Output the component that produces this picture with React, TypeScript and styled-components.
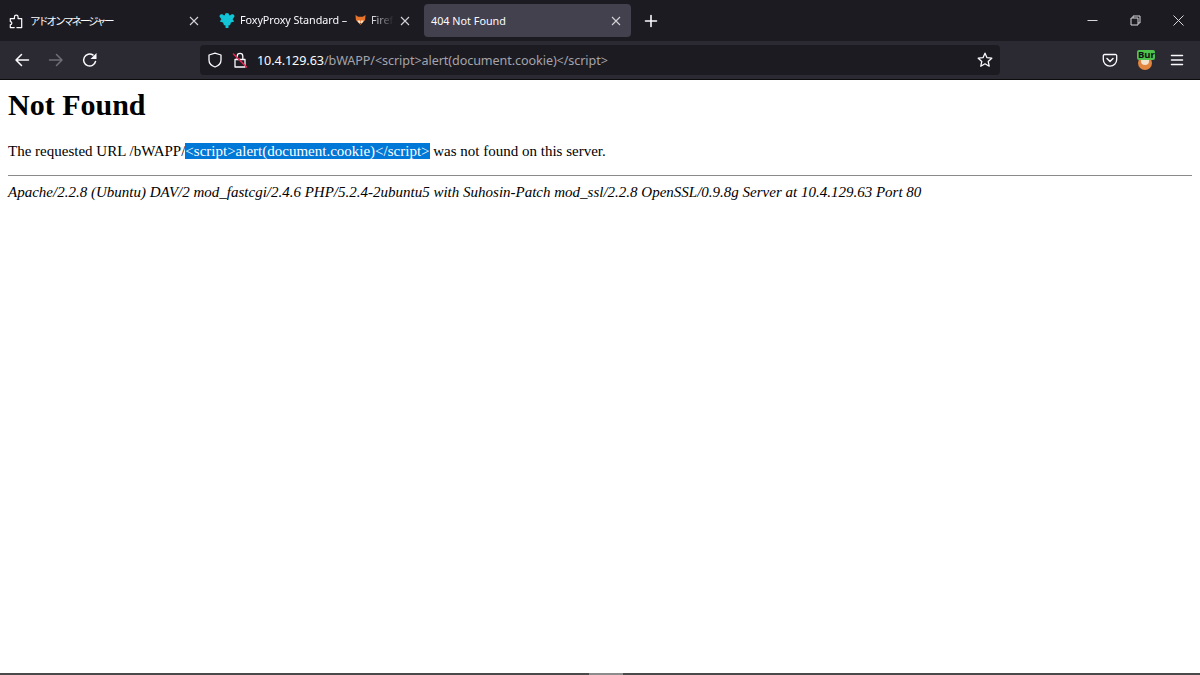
import React from 'react'
import styled, { createGlobalStyle } from 'styled-components'

const GlobalStyle = createGlobalStyle`
  html, body { margin: 0; padding: 0; background: #fff; overflow: hidden; }
`

const UI_FONT = `"Noto Sans", "Noto Sans CJK JP", "Open Sans", sans-serif`
const DOC_FONT = `"Liberation Serif", "Times New Roman", serif`

const Window = styled.div`
  width: 1200px;
  height: 675px;
  display: flex;
  flex-direction: column;
  overflow: hidden;
`

const TabBar = styled.div`
  height: 41px;
  background: #1c1b22;
  display: flex;
  align-items: flex-start;
  flex: none;
`

const Tab = styled.div<{ $active?: boolean; $width: number; $padRight: number }>`
  width: ${p => p.$width}px;
  height: 33px;
  margin-top: 4px;
  flex: none;
  display: flex;
  align-items: center;
  gap: 5px;
  padding: 0 ${p => p.$padRight}px 0 7px;
  box-sizing: border-box;
  border-radius: 4px;
  background: ${p => (p.$active ? '#42414d' : 'transparent')};
  font: 10.8px ${UI_FONT};
  color: #fbfbfe;
  white-space: nowrap;
`

const TabTitle = styled.span`
  flex: 1;
  min-width: 0;
  overflow: hidden;
`

const FadedTitle = styled(TabTitle)`
  letter-spacing: -0.08px;
  -webkit-mask-image: linear-gradient(to right, #000 84%, transparent 100%);
  mask-image: linear-gradient(to right, #000 84%, transparent 100%);
`

const JapaneseTitle = styled(TabTitle)`
  font-size: 10.5px;
  letter-spacing: -2.2px;
`

const FoxMark = styled.span`
  display: inline-block;
  vertical-align: -2px;
  margin: 0 5px 0 8px;
`

const TabSpacer = styled.div<{ $width: number }>`
  width: ${p => p.$width}px;
  flex: none;
`

const IconBox = styled.span<{ $size?: number; $color?: string }>`
  width: ${p => p.$size ?? 16}px;
  height: ${p => p.$size ?? 16}px;
  flex: none;
  display: inline-flex;
  align-items: center;
  justify-content: center;
  color: ${p => p.$color ?? '#fbfbfe'};
  & > svg { display: block; }
`

const NewTab = styled.div`
  width: 40px;
  height: 33px;
  margin-top: 4px;
  display: flex;
  align-items: center;
  justify-content: center;
  color: #fbfbfe;
`

const WindowControls = styled.div`
  margin-left: auto;
  display: flex;
  height: 41px;
  align-items: center;
`

const WindowButton = styled.div`
  width: 43px;
  display: flex;
  justify-content: center;
  color: #d8d8da;
`

const Toolbar = styled.div`
  height: 39px;
  background: #2b2a33;
  display: flex;
  align-items: center;
  flex: none;
  padding-left: 14px;
  box-sizing: border-box;
  border-bottom: 1px solid #0c0c0d;
`

const NavGroup = styled.div`
  width: 186px;
  flex: none;
  display: flex;
  gap: 18px;
`

const UrlBar = styled.div`
  width: 800px;
  height: 30px;
  flex: none;
  background: #1c1b22;
  border-radius: 4px;
  display: flex;
  align-items: center;
  padding: 0 7px;
  box-sizing: border-box;
  gap: 8px;
`

const UrlText = styled.div`
  flex: 1;
  font: 12.6px ${UI_FONT};
  color: #a4a4aa;
  white-space: nowrap;
  letter-spacing: -0.08px;
`

const UrlHost = styled.span`
  color: #fbfbfe;
`

const RightTools = styled.div`
  flex: 1;
  display: flex;
  align-items: center;
  padding-left: 102px;
`

const BurpSlot = styled.div`
  margin: 0 15px 0 18px;
`

const BurpWrap = styled.div`
  position: relative;
  width: 18px;
  height: 18px;
`

const BurpFace = styled.div`
  position: absolute;
  left: 2px;
  top: 5px;
  width: 14px;
  height: 14px;
  border-radius: 50%;
  background: #e2863f;
  &::after {
    content: '';
    position: absolute;
    left: 3px;
    top: 4px;
    width: 8px;
    height: 5px;
    background: #f1e3cf;
    border-radius: 0 0 4px 4px;
  }
`

const BurpBadge = styled.div`
  position: absolute;
  left: 1px;
  top: -1px;
  width: 18px;
  height: 10px;
  background: #4ec34e;
  border-radius: 2px;
  color: #111;
  font: 700 9.5px/10px ${UI_FONT};
  white-space: nowrap;
  text-align: left;
  padding-left: 1px;
  box-sizing: border-box;
`

const Page = styled.main`
  flex: 1;
  background: #fff;
  padding: 7px 8px 0;
  color: #000;
  font: 15px/17px ${DOC_FONT};
  min-height: 0;
`

const Heading = styled.h1`
  margin: 0 0 21px;
  font: 700 30px/35px ${DOC_FONT};
`

const Paragraph = styled.p`
  margin: 0;
  white-space: nowrap;
`

const Selected = styled.span`
  background: #0078d7;
  color: #fff;
`

const Rule = styled.hr`
  margin: 15px 0 8px;
  border: 0;
  height: 1px;
  background: #8a8a8a;
`

const Address = styled.address`
  font-style: italic;
  white-space: nowrap;
`

const BottomEdge = styled.div`
  height: 2px;
  flex: none;
  background: #4a4a4a;
  display: flex;
  justify-content: center;
`

const BottomThumb = styled.div`
  width: 34px;
  margin-left: 12px;
  background: #8c8c8c;
`

const line = { fill: 'none', stroke: 'currentColor', strokeWidth: 1.5, strokeLinecap: 'round', strokeLinejoin: 'round' } as const

const CloseIcon = ({ size = 10 }: { size?: number }) => (
  <svg width={size} height={size} viewBox="0 0 10 10">
    <path d="M1 1l8 8M9 1l-8 8" stroke="currentColor" strokeWidth="1.1" fill="none" />
  </svg>
)

const PuzzleIcon = () => (
  <svg width="14" height="16" viewBox="0 0 16 18">
    <path {...line} strokeWidth={1.4} d="M6 16.5H1.5V13.2C3.8 13.2 3.8 9.6 1.5 9.6V6.2H6.2V4.4C6.2 1.6 10.4 1.6 10.4 4.4V6.2H14.5V16.5H9" />
  </svg>
)

const FoxyIcon = () => (
  <svg width="16" height="16" viewBox="0 0 16 16">
    <path fill="#11c5d6" d="M0.5 3.5A2.2 2.2 0 0 1 4.6 2.3H5.8A2.2 2.2 0 0 1 10.2 2.3H11.4A2.2 2.2 0 0 1 15.5 3.5L13.6 6.2L15.2 8.4L12 9.6L11 12.2H9.6L9.4 15H6.6L6.4 12.2H5L4 9.6L0.8 8.4L2.4 6.2Z" />
  </svg>
)

const FoxFace = () => (
  <svg width="11" height="12" viewBox="0 0 12 12">
    <path fill="#e8742c" d="M0.5 0.5L3.5 2.5H8.5L11.5 0.5L11 6L6 11.5L1 6Z" />
    <path fill="#fbe4cb" d="M2.5 6.5L5.5 6.5L6 10.5L3.5 8.5ZM9.5 6.5L6.5 6.5L6 10.5L8.5 8.5Z" />
    <path fill="#3a2415" d="M5 9.5h2l-1 1.5z" />
  </svg>
)

const LockIcon = () => (
  <svg width="16" height="18" viewBox="0 0 16 18">
    <path {...line} strokeWidth={1.3} d="M3 8.5h10v7.5H3zM5.2 8.5V5.2a2.8 2.8 0 0 1 5.6 0V8.5" />
    <path d="M1.5 3L14.5 16" stroke="#e22850" strokeWidth="1.6" strokeLinecap="round" />
  </svg>
)

const App = () => (
  <Window>
    <GlobalStyle />
    <TabBar>
      <Tab $width={209} $padRight={9}>
        <IconBox $size={18}><PuzzleIcon /></IconBox>
        <JapaneseTitle>アドオンマネージャー</JapaneseTitle>
        <IconBox $size={12} $color="#d4d4d8"><CloseIcon /></IconBox>
      </Tab>
      <TabSpacer $width={3} />
      <Tab $width={203} $padRight={4}>
        <IconBox><FoxyIcon /></IconBox>
        <FadedTitle>FoxyProxy Standard –<FoxMark><FoxFace /></FoxMark>Firefox</FadedTitle>
        <IconBox $size={12} $color="#d4d4d8"><CloseIcon /></IconBox>
      </Tab>
      <TabSpacer $width={9} />
      <Tab $active $width={207} $padRight={9}>
        <TabTitle>404 Not Found</TabTitle>
        <IconBox $size={12} $color="#d4d4d8"><CloseIcon /></IconBox>
      </Tab>
      <NewTab>
        <svg width="14" height="14" viewBox="0 0 14 14">
          <path d="M7 1.5v11M1.5 7h11" stroke="currentColor" strokeWidth="1.6" strokeLinecap="round" />
        </svg>
      </NewTab>
      <WindowControls>
        <WindowButton>
          <svg width="11" height="11" viewBox="0 0 11 11"><path d="M0.5 5.5h10" stroke="currentColor" strokeWidth="1" /></svg>
        </WindowButton>
        <WindowButton>
          <svg width="11" height="11" viewBox="0 0 11 11">
            <path d="M1 3h7v7H1zM3 3V1h7v7H8" stroke="currentColor" strokeWidth="1" fill="none" />
          </svg>
        </WindowButton>
        <WindowButton>
          <svg width="11" height="11" viewBox="0 0 11 11"><path d="M0.5 0.5l10 10M10.5 0.5l-10 10" stroke="currentColor" strokeWidth="1" /></svg>
        </WindowButton>
      </WindowControls>
    </TabBar>

    <Toolbar>
      <NavGroup>
        <IconBox>
          <svg width="16" height="16" viewBox="0 0 16 16"><path {...line} d="M14.5 8H2M7.5 2.5L2 8l5.5 5.5" /></svg>
        </IconBox>
        <IconBox $color="#6f6e76">
          <svg width="16" height="16" viewBox="0 0 16 16"><path {...line} d="M1.5 8H14M8.5 2.5L14 8l-5.5 5.5" /></svg>
        </IconBox>
        <IconBox>
          <svg width="16" height="16" viewBox="0 0 16 16">
            <path {...line} d="M13.5 9.5A6 6 0 1 1 11 3" />
            <path fill="currentColor" d="M14.5 1v6h-6z" />
          </svg>
        </IconBox>
      </NavGroup>
      <UrlBar>
        <IconBox>
          <svg width="16" height="16" viewBox="0 0 16 16">
            <path {...line} strokeWidth={1.3} d="M8 1.2L14 3v5c0 3.5-3 6-6 7-3-1-6-3.5-6-7V3z" />
          </svg>
        </IconBox>
        <IconBox $size={18}><LockIcon /></IconBox>
        <UrlText><UrlHost>10.4.129.63</UrlHost>/bWAPP/&lt;script&gt;alert(document.cookie)&lt;/script&gt;</UrlText>
        <IconBox>
          <svg width="16" height="16" viewBox="0 0 16 16">
            <path {...line} strokeWidth={1.3} d="M8 1.2l2 4.5 4.8.5-3.6 3.2 1 4.8L8 11.8l-4.2 2.4 1-4.8L1.2 6.2 6 5.7z" />
          </svg>
        </IconBox>
      </UrlBar>
      <RightTools>
        <IconBox>
          <svg width="16" height="16" viewBox="0 0 16 16">
            <path {...line} strokeWidth={1.3} d="M2.5 2.5h11A1.2 1.2 0 0 1 14.7 3.7V7.5a6.7 6.7 0 0 1-13.4 0V3.7A1.2 1.2 0 0 1 2.5 2.5z" />
            <path {...line} strokeWidth={1.5} d="M5 6.5L8 9.5l3-3" />
          </svg>
        </IconBox>
        <BurpSlot>
          <BurpWrap>
            <BurpFace />
            <BurpBadge>Bur</BurpBadge>
          </BurpWrap>
        </BurpSlot>
        <IconBox>
          <svg width="16" height="16" viewBox="0 0 16 16">
            <path d="M2.5 3.5h11M2.5 8h11M2.5 12.5h11" stroke="currentColor" strokeWidth="1.5" strokeLinecap="round" />
          </svg>
        </IconBox>
      </RightTools>
    </Toolbar>

    <Page>
      <Heading>Not Found</Heading>
      <Paragraph>
        The requested URL /bWAPP/<Selected>&lt;script&gt;alert(document.cookie)&lt;/script&gt;</Selected> was not found on this server.
      </Paragraph>
      <Rule />
      <Address>Apache/2.2.8 (Ubuntu) DAV/2 mod_fastcgi/2.4.6 PHP/5.2.4-2ubuntu5 with Suhosin-Patch mod_ssl/2.2.8 OpenSSL/0.9.8g Server at 10.4.129.63 Port 80</Address>
    </Page>
    <BottomEdge>
      <BottomThumb />
    </BottomEdge>
  </Window>
)

export default App
